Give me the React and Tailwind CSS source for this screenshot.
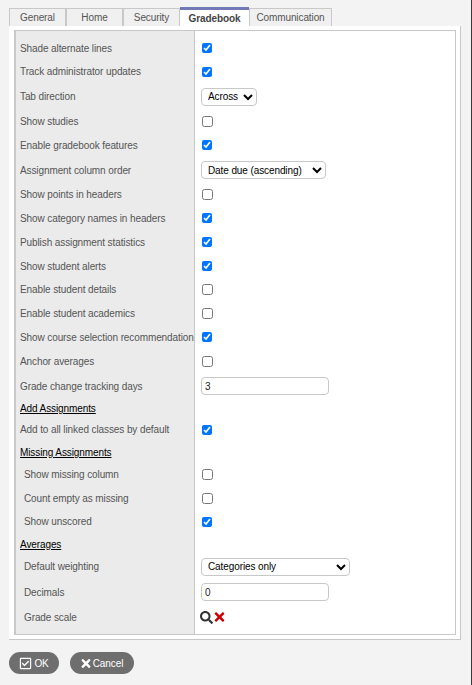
import React from "react";
import { FaSearch, FaTimes, FaRegCheckSquare } from "react-icons/fa";

const tabs = [
  { label: "General", width: "w-[57px]" },
  { label: "Home", width: "w-[57px]" },
  { label: "Security", width: "w-[57px]" },
  { label: "Gradebook", width: "w-[69px]", active: true },
  { label: "Communication", width: "w-[83px]" },
];

const Check = ({ on }) => (
  <input
    type="checkbox"
    defaultChecked={on}
    className={`m-0 ml-[1px] block ${on ? "h-[10px] w-[10px]" : "h-[11px] w-[11px]"}`}
  />
);

const Select = ({ value, options, width }) => (
  <select
    defaultValue={value}
    className={`block h-[18px] rounded-[4px] border border-[#c8c8c8] bg-white pl-[2px] text-[10px] tracking-[-0.1px] text-black outline-none ${width}`}
  >
    {options.map((o) => (
      <option key={o}>{o}</option>
    ))}
  </select>
);

const Text = ({ value, width }) => (
  <input
    type="text"
    defaultValue={value}
    className={`block h-[18px] rounded-[4px] border border-[#c8c8c8] bg-white pl-[3px] text-[10px] text-[#222] outline-none ${width}`}
  />
);

const Heading = ({ children, height }) => (
  <div className={`flex ${height}`}>
    <div className="flex w-[178px] items-center pl-[4px] text-black underline">{children}</div>
    <div className="ml-[1px] flex-1" />
  </div>
);

const Row = ({ label, height, indent, children }) => (
  <div className={`flex ${height}`}>
    <div className={`flex w-[178px] items-center whitespace-nowrap ${indent ? "pl-[8px]" : "pl-[4px]"}`}>
      {label}
    </div>
    <div className="ml-[1px] flex flex-1 items-center pl-[6px]">{children}</div>
  </div>
);

export default function App() {
  return (
    <div className="h-[685px] w-[472px] overflow-hidden border-r border-[#3a3a3a] bg-[#f3f3f3] font-['Liberation_Sans',Arial,sans-serif] text-[10px] tracking-[-0.1px] text-[#555]">
      <div className="flex h-[26px] items-end pl-[9px]">
        {tabs.map((t) =>
          t.active ? (
            <div
              key={t.label}
              className={`flex h-[19px] items-center justify-center border-t-[3px] border-[#7279b4] bg-white font-bold text-[#444] ${t.width}`}
            >
              {t.label}
            </div>
          ) : (
            <div
              key={t.label}
              className={`flex h-[18px] items-center justify-center border border-b-0 border-[#c8c8c8] bg-[#f0f0f0] text-[#555] ${t.width}`}
            >
              {t.label}
            </div>
          )
        )}
      </div>
      <div className="ml-[9px] mr-[10px] h-[614px] border-r border-b border-[#c8c8c8] bg-white pt-[4px] pr-[4px] pb-[4px] pl-[5px]">
        <div className="relative h-[605px] border border-l-2 border-[#c8c8c8] bg-white">
          <div className="relative flex h-full flex-col pt-[5px]">
            <div className="absolute inset-y-0 left-0 box-content w-[178px] border-r border-[#c8c8c8] bg-[#ebebeb]" />
            <div className="relative flex flex-col">
              <Row label="Shade alternate lines" height="h-[24px]"><Check on /></Row>
              <Row label="Track administrator updates" height="h-[23px]"><Check on /></Row>
              <Row label="Tab direction" height="h-[27px]">
                <Select value="Across" options={["Across"]} width="w-[56px]" />
              </Row>
              <Row label="Show studies" height="h-[23px]"><Check /></Row>
              <Row label="Enable gradebook features" height="h-[24px]"><Check on /></Row>
              <Row label="Assignment column order" height="h-[26px]">
                <Select value="Date due (ascending)" options={["Date due (ascending)"]} width="w-[125px]" />
              </Row>
              <Row label="Show points in headers" height="h-[23px]"><Check /></Row>
              <Row label="Show category names in headers" height="h-[24px]"><Check on /></Row>
              <Row label="Publish assignment statistics" height="h-[24px]"><Check on /></Row>
              <Row label="Show student alerts" height="h-[24px]"><Check on /></Row>
              <Row label="Enable student details" height="h-[23px]"><Check /></Row>
              <Row label="Enable student academics" height="h-[24px]"><Check /></Row>
              <Row label="Show course selection recommendation" height="h-[24px]"><Check on /></Row>
              <Row label="Anchor averages" height="h-[24px]"><Check /></Row>
              <Row label="Grade change tracking days" height="h-[26px]">
                <Text value="3" width="w-[128px]" />
              </Row>
              <Heading height="h-[19px]">Add Assignments</Heading>
              <Row label="Add to all linked classes by default" height="h-[23px]"><Check on /></Row>
              <Heading height="h-[22px]">Missing Assignments</Heading>
              <Row label="Show missing column" height="h-[22px]" indent><Check /></Row>
              <Row label="Count empty as missing" height="h-[26px]" indent><Check /></Row>
              <Row label="Show unscored" height="h-[21px]" indent><Check on /></Row>
              <Heading height="h-[24px]">Averages</Heading>
              <Row label="Default weighting" height="h-[21px]" indent>
                <Select value="Categories only" options={["Categories only"]} width="w-[149px]" />
              </Row>
              <Row label="Decimals" height="h-[30px]" indent>
                <Text value="0" width="w-[128px]" />
              </Row>
              <Row label="Grade scale" height="h-[20px]" indent>
                <div className="-ml-[1px] flex items-center">
                  <FaSearch className="h-[13px] w-[13px] text-[#333]" />
                  <FaTimes className="ml-[1px] h-[14px] w-[11px] text-[#cc0000]" />
                </div>
              </Row>
            </div>
          </div>
        </div>
      </div>
      <div className="flex gap-[11px] pt-[12px] pl-[9px]">
        <button className="flex h-[22px] w-[50px] items-center justify-center gap-[2px] rounded-full bg-[#6e6e6e] text-white">
          <FaRegCheckSquare className="h-[13px] w-[13px]" />
          OK
        </button>
        <button className="flex h-[22px] w-[64px] items-center justify-center gap-[2px] rounded-full bg-[#6e6e6e] text-white">
          <FaTimes className="h-[13px] w-[10px]" />
          Cancel
        </button>
      </div>
    </div>
  );
}
